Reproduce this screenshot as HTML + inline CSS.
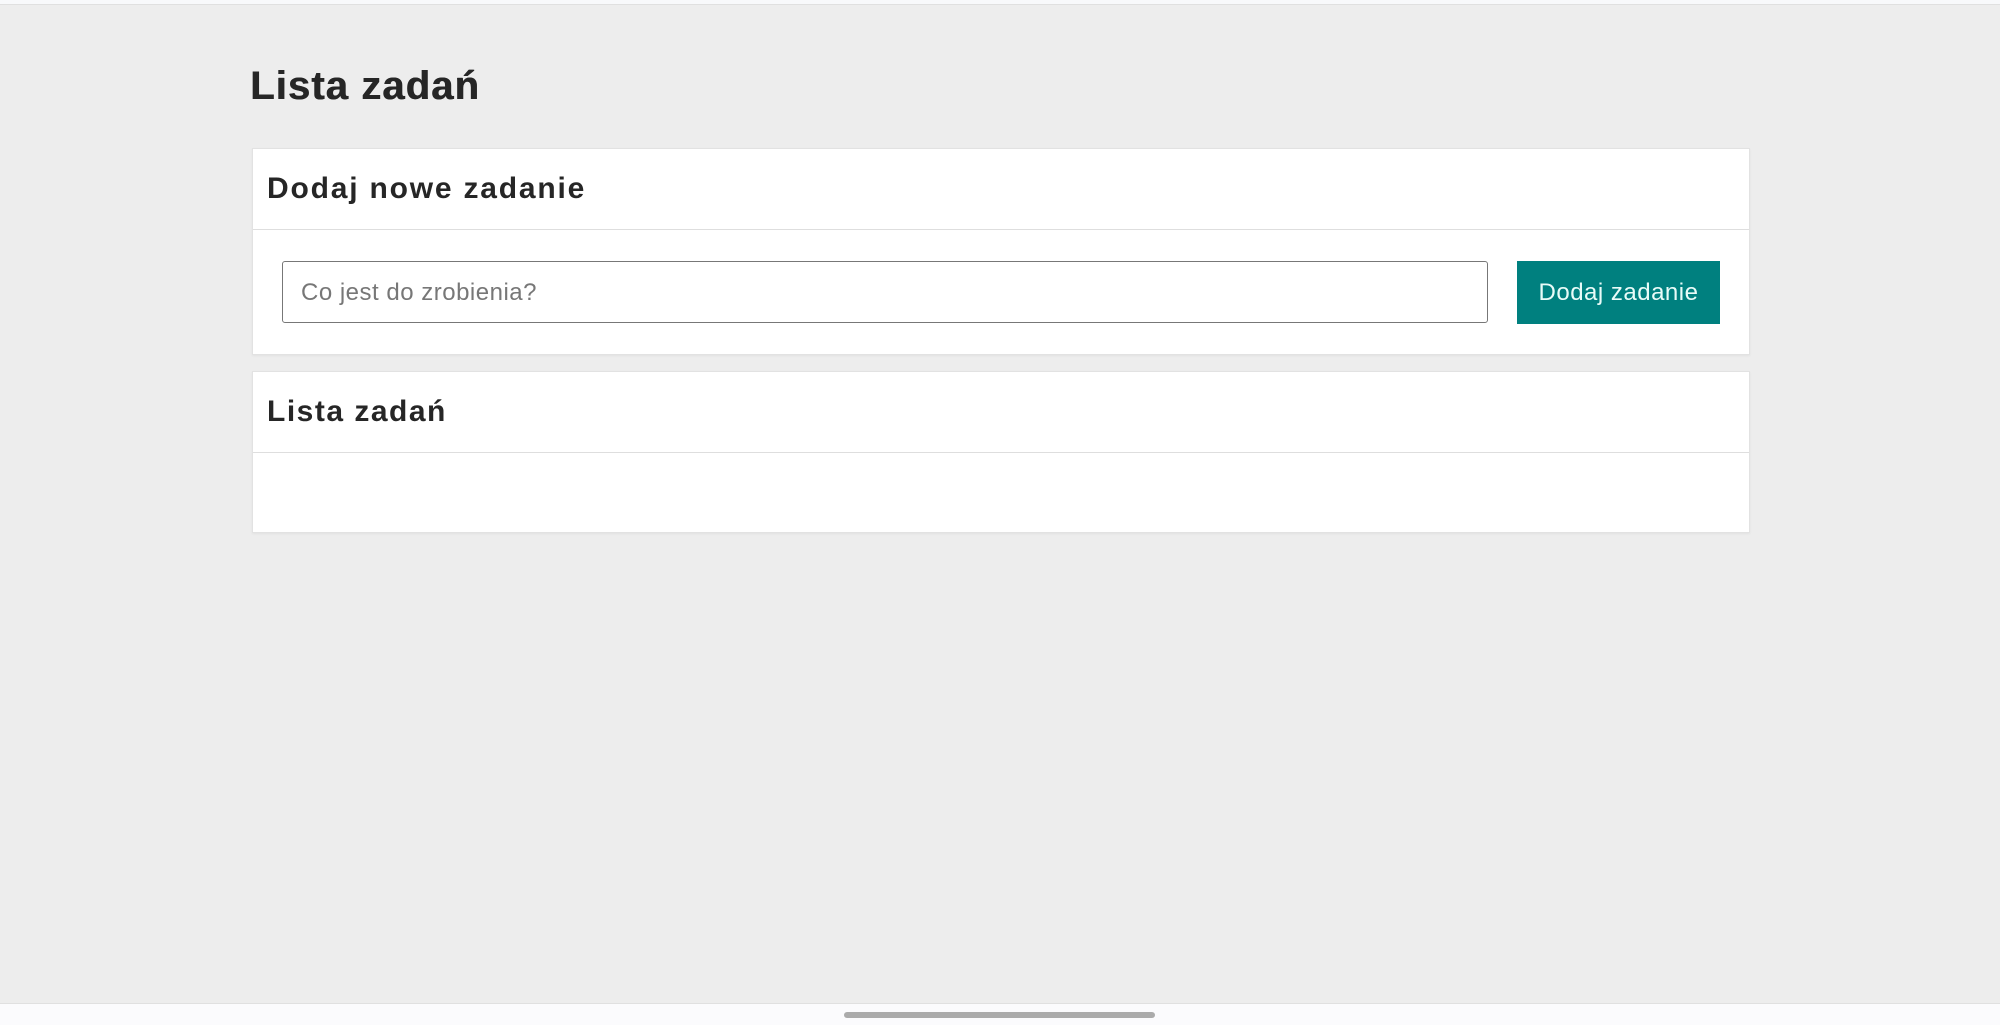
<!DOCTYPE html>
<html><head><meta charset="utf-8"><style>
*{box-sizing:border-box;margin:0;padding:0}
html,body{width:2000px;height:1025px;overflow:hidden;background:#ededed;font-family:"Liberation Sans",sans-serif;color:#262626}
.top{position:absolute;left:0;top:0;width:2000px;height:5px;background:#f8f9fb;border-bottom:1px solid #e0e0e0}
.bot{position:absolute;left:0;top:1003px;width:2000px;height:22px;background:#fbfbfd;border-top:1px solid #e0e0e0}
.thumb{position:absolute;left:844px;top:8px;width:311px;height:6px;border-radius:3px;background:#ababab}
h1{position:absolute;left:250px;top:63px;font-size:40px;font-weight:900;letter-spacing:1.1px;line-height:46px;text-shadow:0.6px 0 0 #262626}
.card{position:absolute;left:252px;width:1498px;background:#fff;border:1px solid #e2e2e2;box-shadow:0 1px 2px rgba(0,0,0,.05)}
.hd{height:81px;border-bottom:1px solid #dedede;font-size:30px;font-weight:bold;padding-left:14px;line-height:80px;letter-spacing:1.5px}
.inp{position:absolute;left:29px;top:112px;width:1206px;height:62px;border:1px solid #777;border-radius:3px;font-size:24px;color:#777;padding-left:18px;line-height:62px;letter-spacing:.5px}
.btn{position:absolute;left:1264px;top:112px;width:203px;height:63px;background:#00807f;color:#e8fbf8;font-size:24px;text-align:center;line-height:64px;letter-spacing:.5px}
</style></head><body>
<div class="top"></div>
<h1>Lista zadań</h1>
<div class="card" style="top:148px;height:207px">
<div class="hd" style="letter-spacing:1.8px">Dodaj nowe zadanie</div>
<div class="inp">Co jest do zrobienia?</div>
<div class="btn">Dodaj zadanie</div>
</div>
<div class="card" style="top:371px;height:162px">
<div class="hd">Lista zadań</div>
</div>
<div class="bot"><div class="thumb"></div></div>
</body></html>
